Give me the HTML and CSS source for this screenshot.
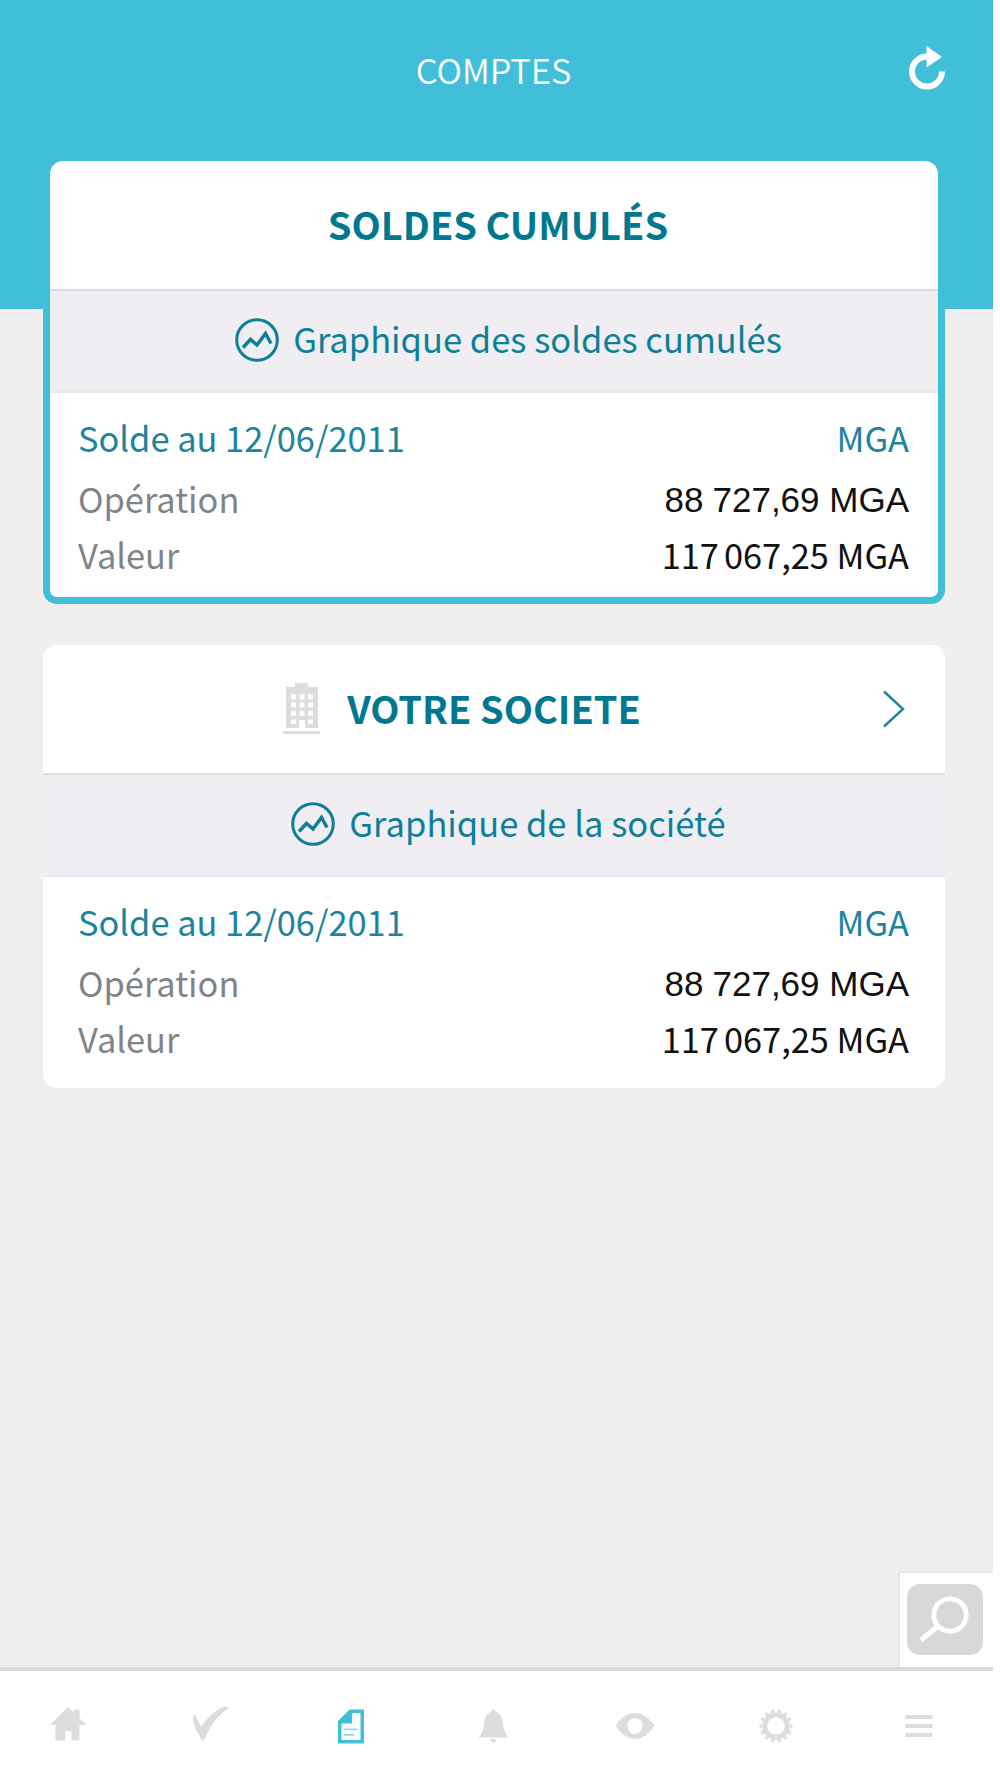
FILE: index.html
```html
<!DOCTYPE html>
<html lang="fr">
<head>
<meta charset="UTF-8">
<title>Comptes</title>
<link rel="stylesheet" href="styles.css">
</head>
<body>
	<div class="app">
		<header class="topbar">
			<h1>COMPTES</h1>
			<svg class="refresh" width="36" height="45" viewBox="0 0 36 45">
				<path d="M18 10.5A15 15 0 1 0 33 25.5" fill="none" stroke="#fff" stroke-width="6"/>
				<path d="M17.500 0L33 11L17.500 21.500z" fill="#fff"/>
			</svg>
		</header>

		<main class="content">
			<!-- soldes cumules -->
			<section class="card selected">
				<div class="card-title">
					<h2>SOLDES CUMULÉS</h2>
				</div>
				<div class="graph">
					<svg width="44" height="44" viewBox="0 0 44 44" fill="none" stroke="#0d7f99">
						<circle cx="22" cy="22" r="20.300" stroke-width="3"/>
						<path d="M8 29.500L15.500 21.500L22 27L30.500 15.500L36 25.500" stroke-width="3.500"/>
					</svg>
					<span>Graphique des soldes cumulés</span>
				</div>
				<div class="soldes">
					<div class="row date"><span>Solde au 12/06/2011</span><span>MGA</span></div>
					<div class="row"><span>Opération</span><span class="montant op"><i>88</i>727,69 MGA</span></div>
					<div class="row"><span>Valeur</span><span class="montant"><i>117</i>067,25 MGA</span></div>
				</div>
			</section>

			<!-- societe -->
			<section class="card">
				<div class="card-title">
					<svg class="building" width="38" height="52" viewBox="0 0 38 52">
						<path fill="#dedddc" fill-rule="evenodd" d="M12 0h13v4h10v41H22v-8h-6v8H3V4h9zM8 11.500v5h5v-5zM16.500 11.500v5h5v-5zM25 11.500v5h5v-5zM8 19.500v5h5v-5zM16.500 19.500v5h5v-5zM25 19.500v5h5v-5zM8 28v5h5v-5zM16.500 28v5h5v-5zM25 28v5h5v-5zM8 36.500v4.500h5v-4.500zM25 36.500v4.500h5v-4.500z"/>
						<path fill="#dedddc" d="M0 48h37v3H0z"/>
					</svg>
					<h2>VOTRE SOCIETE</h2>
					<svg class="chevron" width="22" height="38" viewBox="0 0 22 38">
						<path d="M1 1.500L20 19L1 36.500" fill="none" stroke="#1c849d" stroke-width="2.400"/>
					</svg>
				</div>
				<div class="graph">
					<svg width="44" height="44" viewBox="0 0 44 44" fill="none" stroke="#0d7f99">
						<circle cx="22" cy="22" r="20.300" stroke-width="3"/>
						<path d="M8 29.500L15.500 21.500L22 27L30.500 15.500L36 25.500" stroke-width="3.500"/>
					</svg>
					<span>Graphique de la société</span>
				</div>
				<div class="soldes">
					<div class="row date"><span>Solde au 12/06/2011</span><span>MGA</span></div>
					<div class="row"><span>Opération</span><span class="montant op"><i>88</i>727,69 MGA</span></div>
					<div class="row"><span>Valeur</span><span class="montant"><i>117</i>067,25 MGA</span></div>
				</div>
			</section>
		</main>

		<div class="search">
			<svg width="76" height="71" viewBox="0 0 76 71">
				<rect width="76" height="71" rx="13" fill="#d8d8d6"/>
				<circle cx="43" cy="31" r="16.200" fill="none" stroke="#fff" stroke-width="4.800"/>
				<path d="M31 42L14 56" stroke="#fff" stroke-width="5"/>
			</svg>
		</div>

		<nav class="tabs">
			<a><svg width="40" height="40" viewBox="0 0 40 40">
				<path d="M20 1L26 6.500V3.500H31.500V12L38 19H31.500V34.500H23.500V25H17V34.500H7.500V19H2z"/>
			</svg></a>
			<a><svg width="40" height="40" viewBox="0 0 40 40">
				<path d="M2.500 11Q4 6.500 6 10Q7 15 11 20.500Q21 6.500 32 1.500Q35 0 39 2Q24 11 14.500 33L12.500 35Q4 23 2.500 11z"/>
			</svg></a>
			<a class="active"><svg width="40" height="40" viewBox="1 -1 40 40">
				<path fill-rule="evenodd" d="M7 14L18.500 2.500H33V36.500H7zM10.500 16.500V33H29.500V6H21V16.500z"/>
				<path d="M12.500 21.500h14v1.800h-14zM12.500 27h11v1.800h-11z" opacity=".6"/>
			</svg></a>
			<a><svg width="40" height="40" viewBox="0.500 -0.500 40 40">
				<path d="M18 5Q20 0 22 5C29 8 29 13 30 20Q30.500 26 35 31H5Q9.500 26 10 20C11 13 11 8 18 5zM17 32.500H23Q22.500 36 20 36.500Q17.500 36 17 32.500z"/>
			</svg></a>
			<a><svg width="40" height="40" viewBox="0 -0.500 40 40">
				<path fill-rule="evenodd" d="M0.500 19Q9 6.500 20 6.500T39.500 19Q31 32.500 20 32.500T0.500 19zM20 11.500A7.500 8 0 0 0 20 27.500A7.500 8 0 0 0 20 11.500z"/>
			</svg></a>
			<a><svg width="40" height="40" viewBox="1 -0.500 40 40">
				<circle cx="20" cy="19.500" r="11.300" fill="none" stroke="#dedddc" stroke-width="5"/>
				<circle cx="20" cy="19.500" r="15" fill="none" stroke="#dedddc" stroke-width="3" pathLength="140" stroke-dasharray="5 5" stroke-dashoffset="2.500"/>
			</svg></a>
			<a><svg width="40" height="40" viewBox="0 -1 40 40">
				<path d="M6.500 8h27v4h-27zM6.500 17h27v4h-27zM6.500 26h27v4h-27z"/>
			</svg></a>
		</nav>
	</div>
</body>
</html>
```
FILE: styles.css
```css
* {
	margin: 0;
	padding: 0;
	box-sizing: border-box;
}
body {
	background: #fff;
	font-family: "Noto Sans CJK SC", "Open Sans", sans-serif;
	color: #0d7f99;
}
svg {
	display: block;
	flex: none;
}
.app {
	position: relative;
	width: 993px;
	height: 1778px;
	background: #efefed;
	display: flex;
	flex-direction: column;
}
.topbar {
	height: 309px;
	flex: none;
	padding: 46px 48px 0 42px;
	background: #42bfd8;
	display: grid;
	grid-template-columns: 1fr auto 1fr;
	align-items: start;
}
.topbar h1 {
	grid-column: 2;
	font-size: 34.5px;
	line-height: 46px;
	font-weight: 350;
	color: #fff;
}
.refresh {
	justify-self: end;
}
.content {
	flex: 1;
	margin-top: -155px;
	padding: 0 48px 0 43px;
}
.card {
	height: 443px;
	margin-bottom: 41px;
	background: #fff;
	border-radius: 14px;
	overflow: hidden;
}
.selected {
	height: 450px;
	border: 7px solid #42bfd8;
	border-radius: 20px 20px 14px 14px;
}
.card-title {
	height: 130px;
	border-bottom: 2px solid #dcdcdc;
	display: grid;
	grid-template-columns: 1fr auto 1fr;
	align-items: center;
}
.selected .card-title {
	padding-left: 8px;
}
h2 {
	grid-column: 2;
	padding-bottom: 2px;
	font-size: 38px;
	line-height: 50px;
	font-weight: 700;
	color: #00788f;
}
.building {
	justify-self: end;
	margin-right: 26px;
}
.chevron {
	justify-self: end;
	margin-right: 40px;
}
.graph {
	height: 102px;
	padding: 0 0 3px 29px;
	background: #f0eef3;
	border-bottom: 2px solid #e8e7ea;
	display: flex;
	justify-content: center;
	align-items: center;
	gap: 14px;
	font-size: 34.5px;
}
.graph span {
	padding-bottom: 4px;
}
.soldes {
	padding: 16px 36px 0 35px;
	font-size: 34.4px;
}
.selected .soldes {
	padding: 16px 29px 0 28px;
}
.row {
	height: 56px;
	line-height: 56px;
	display: flex;
	justify-content: space-between;
	color: #808488;
}
.date {
	height: 61px;
	color: #1c849d;
}
.montant {
	color: #111;
}
/* separateur de milliers plus etroit qu'une espace */
.montant i {
	font-style: normal;
	margin-right: 5px;
}
.op {
	font-family: "Liberation Sans", Arial, sans-serif;
	font-size: 35px;
	line-height: 60px;
}
.op i {
	margin-right: 9px;
}
/* recherche flottante au dessus des onglets */
.search {
	position: absolute;
	right: 0;
	bottom: 111px;
	width: 95px;
	height: 96px;
	padding: 11px 0 0 7px;
	background: #fff;
	border: solid #e6e6e5;
	border-width: 2px 0 0 2px;
}
.tabs {
	height: 111px;
	flex: none;
	padding-top: 35px;
	background: #fff;
	border-top: 4px solid #dadada;
	display: flex;
}
.tabs a {
	flex: 1;
	fill: #dedddc;
}
.tabs svg {
	margin: 0 auto;
	transform: translateX(-3px);
}
.tabs .active {
	fill: #42bfd8;
}
```
